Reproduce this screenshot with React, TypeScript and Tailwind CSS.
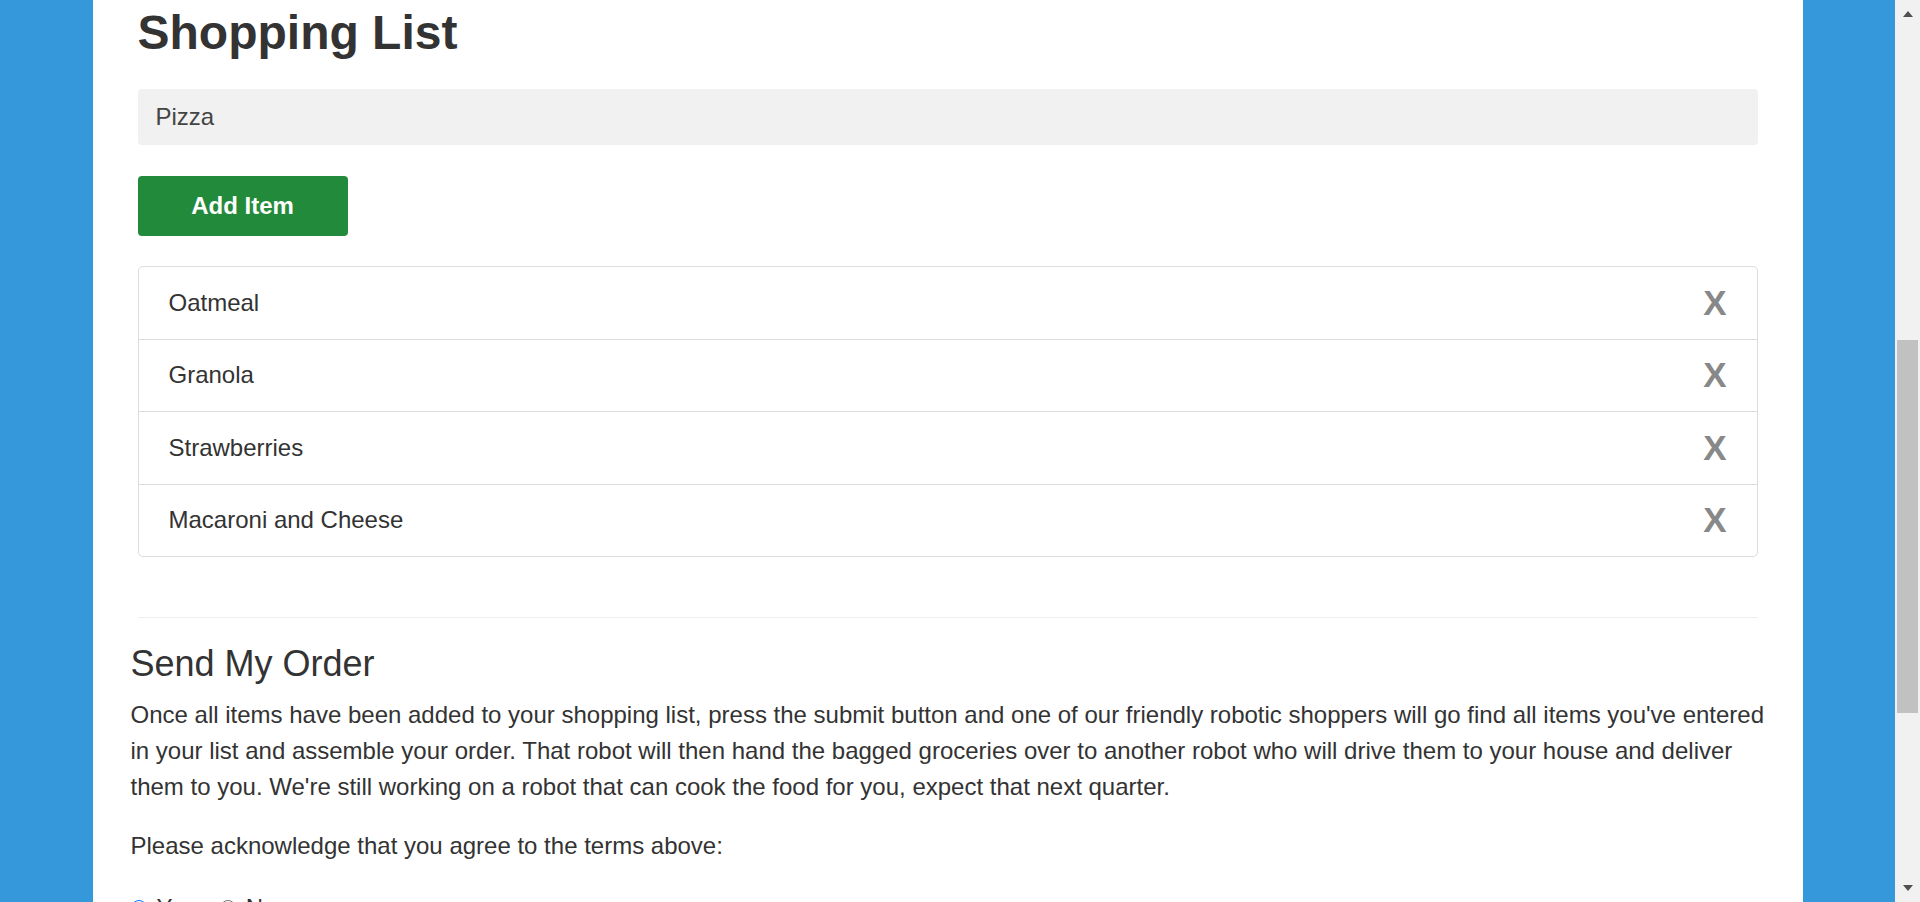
import { useState } from "react";

const items = ["Oatmeal", "Granola", "Strawberries", "Macaroni and Cheese"];

function Scrollbar() {
  return (
    <div className="relative w-[25px] shrink-0 bg-[#f1f1f1]">
      {/* up arrow */}
      <div className="absolute left-[8px] top-[11px] h-0 w-0 border-x-[5px] border-b-[6px] border-x-transparent border-b-[#505050]" />
      {/* thumb */}
      <div className="absolute left-[2px] top-[340px] h-[373px] w-[21px] bg-[#c1c1c1]" />
      {/* down arrow */}
      <div className="absolute left-[8px] top-[885px] h-0 w-0 border-x-[5px] border-t-[6px] border-x-transparent border-t-[#505050]" />
    </div>
  );
}

export default function App() {
  const [list, setList] = useState(items);
  const [text, setText] = useState("Pizza");
  const [agree, setAgree] = useState("yes");

  return (
    <div className="flex h-[902px] overflow-hidden bg-[#3498db] font-['Liberation_Sans',Arial,sans-serif] text-[#333]">
      <div className="flex flex-1 justify-center">
        <main className="w-[1710px] bg-white px-[38px] pt-[6px]">
          <div className="px-[7px]">
            <h1 className="text-[48px] font-bold leading-[53px]">Shopping List</h1>

            <input
              value={text}
              onChange={(e) => setText(e.target.value)}
              className="mt-[30px] block h-[56px] w-full rounded-[4px] bg-[#f1f1f1] px-[18px] text-[24px] text-[#444] outline-none"
            />

            <button
              onClick={() => text && setList([...list, text])}
              className="mt-[31px] h-[60px] w-[210px] rounded-[4px] bg-[#228b3b] text-[24px] font-bold text-white"
            >
              Add Item
            </button>

            <ul className="mt-[30px] rounded-[5px] border border-[#ddd]">
              {list.map((item, i) => (
                <li
                  key={item + i}
                  className="flex items-center justify-between border-t border-[#ddd] px-[30px] py-[17.75px] text-[24px] leading-[36px] first:border-t-0"
                >
                  <span>{item}</span>
                  <button
                    onClick={() => setList(list.filter((_, j) => j !== i))}
                    className="text-[35px] font-bold leading-[36px] text-[#888]"
                  >
                    X
                  </button>
                </li>
              ))}
            </ul>

            <hr className="mt-[60px] border-t border-[#eee]" />
          </div>

          <h2 className="mt-[26px] text-[36px] leading-[39.6px]">Send My Order</h2>
          <p className="mt-[13.5px] text-[24px] leading-[36px]">
            Once all items have been added to your shopping list, press the submit button and one of our
            friendly robotic shoppers will go find all items you've entered in your list and assemble your
            order. That robot will then hand the bagged groceries over to another robot who will drive them
            to your house and deliver them to you. We're still working on a robot that can cook the food for
            you, expect that next quarter.
          </p>
          <p className="mt-[23px] text-[24px] leading-[36px]">
            Please acknowledge that you agree to the terms above:
          </p>

          <div className="mt-[26px] flex items-center text-[24px] leading-[36px]">
            <label className="flex items-center">
              <input
                type="radio"
                name="agree"
                checked={agree === "yes"}
                onChange={() => setAgree("yes")}
                className="m-0 h-[16px] w-[16px] accent-[#0075ff]"
              />
              <span className="ml-[10px]">Yes</span>
            </label>
            <label className="ml-[24px] flex items-center">
              <input
                type="radio"
                name="agree"
                checked={agree === "no"}
                onChange={() => setAgree("no")}
                className="m-0 h-[16px] w-[16px]"
              />
              <span className="ml-[10px]">No</span>
            </label>
          </div>
        </main>
      </div>
      <Scrollbar />
    </div>
  );
}
